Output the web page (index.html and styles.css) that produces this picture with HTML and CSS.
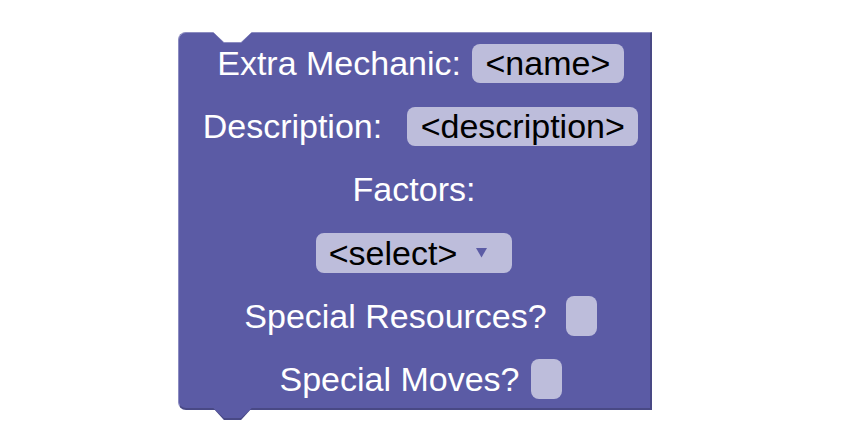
FILE: index.html
```html
<!DOCTYPE html>
<html>
<head>
<meta charset="utf-8">
<link rel="stylesheet" href="styles.css">
</head>
<body>
<div class="canvas">
  <div class="block">
    <span class="notch"><span class="notch-hole"></span></span>
    <div class="row">
      <span class="label">Extra Mechanic:</span>
      <span class="field">&lt;name&gt;</span>
    </div>
    <div class="row wide">
      <span class="label">Description:</span>
      <span class="field">&lt;description&gt;</span>
    </div>
    <div class="row back">
      <span class="label">Factors:</span>
    </div>
    <div class="row back">
      <span class="field dropdown">&lt;select&gt;<svg class="arrow" width="11" height="10" viewBox="0 0 11 10"><polygon points="0,0 11,0 5.5,9.5" fill="#5b5ba5"/></svg></span>
    </div>
    <div class="row mid">
      <span class="label">Special Resources?</span>
      <span class="check"></span>
    </div>
    <div class="row">
      <span class="label">Special Moves?</span>
      <span class="check"></span>
    </div>
    <span class="tab"><span class="tab-fill"></span></span>
  </div>
</div>
</body>
</html>
```

FILE: styles.css
```css
html, body {
  margin: 0;
  padding: 0;
  background: #ffffff;
}

.canvas {
  box-sizing: border-box;
  min-height: 440px;
  padding: 32px 0 0 178px;
}

.block {
  position: relative;
  box-sizing: border-box;
  width: 474px;
  height: 378px;
  background: #5b5ba5;
  border-top: 1px solid #8c8cc1;
  border-left: 1px solid #8c8cc1;
  border-right: 2px solid #494985;
  border-bottom: 2px solid #494985;
  border-radius: 8px 0 0 8px;
  padding: 10px 0 0 12px;
  display: flex;
  flex-direction: column;
  align-items: center;
  gap: 23.2px;
  font-family: "Liberation Sans", Arial, sans-serif;
  font-size: 34px;
}

/* top notch (previous-statement connector) */
.notch {
  position: absolute;
  top: -1px;
  left: 34px;
  width: 39px;
  height: 11px;
  background: #8c8cc1;
  clip-path: polygon(0 0, 100% 0, 72% 100%, 28% 100%);
}

.notch-hole {
  display: block;
  width: 39px;
  height: 10px;
  background: #ffffff;
  clip-path: polygon(0 0, 100% 0, 72% 100%, 28% 100%);
}

/* bottom tab (next-statement connector) */
.tab {
  position: absolute;
  top: 100%;
  left: 34px;
  width: 39px;
  height: 12px;
  background: #494985;
  clip-path: polygon(0 0, 100% 0, 72% 100%, 28% 100%);
}

.tab-fill {
  display: block;
  width: 39px;
  height: 10px;
  background: #5b5ba5;
  clip-path: polygon(0 0, 100% 0, 72% 100%, 28% 100%);
}

.row {
  height: 40px;
  display: flex;
  align-items: center;
  gap: 11px;
  line-height: 40px;
}

.row.wide {
  gap: 25px;
}

.row.mid {
  gap: 19px;
}

.row.back {
  margin-right: 13px;
}

.label {
  color: #ffffff;
  white-space: pre;
}

.field {
  background: #bdbddb;
  color: #000000;
  border-radius: 8px;
  height: 39px;
  line-height: 39px;
  padding: 0 13.5px;
  white-space: pre;
  display: flex;
  align-items: center;
}

.dropdown {
  height: 40px;
  line-height: 40px;
  padding: 0 25px 0 13px;
}

.arrow {
  display: block;
  margin-left: 19px;
}

.check {
  display: block;
  width: 31px;
  height: 40px;
  border-radius: 8px;
  background: #bdbddb;
}
```
